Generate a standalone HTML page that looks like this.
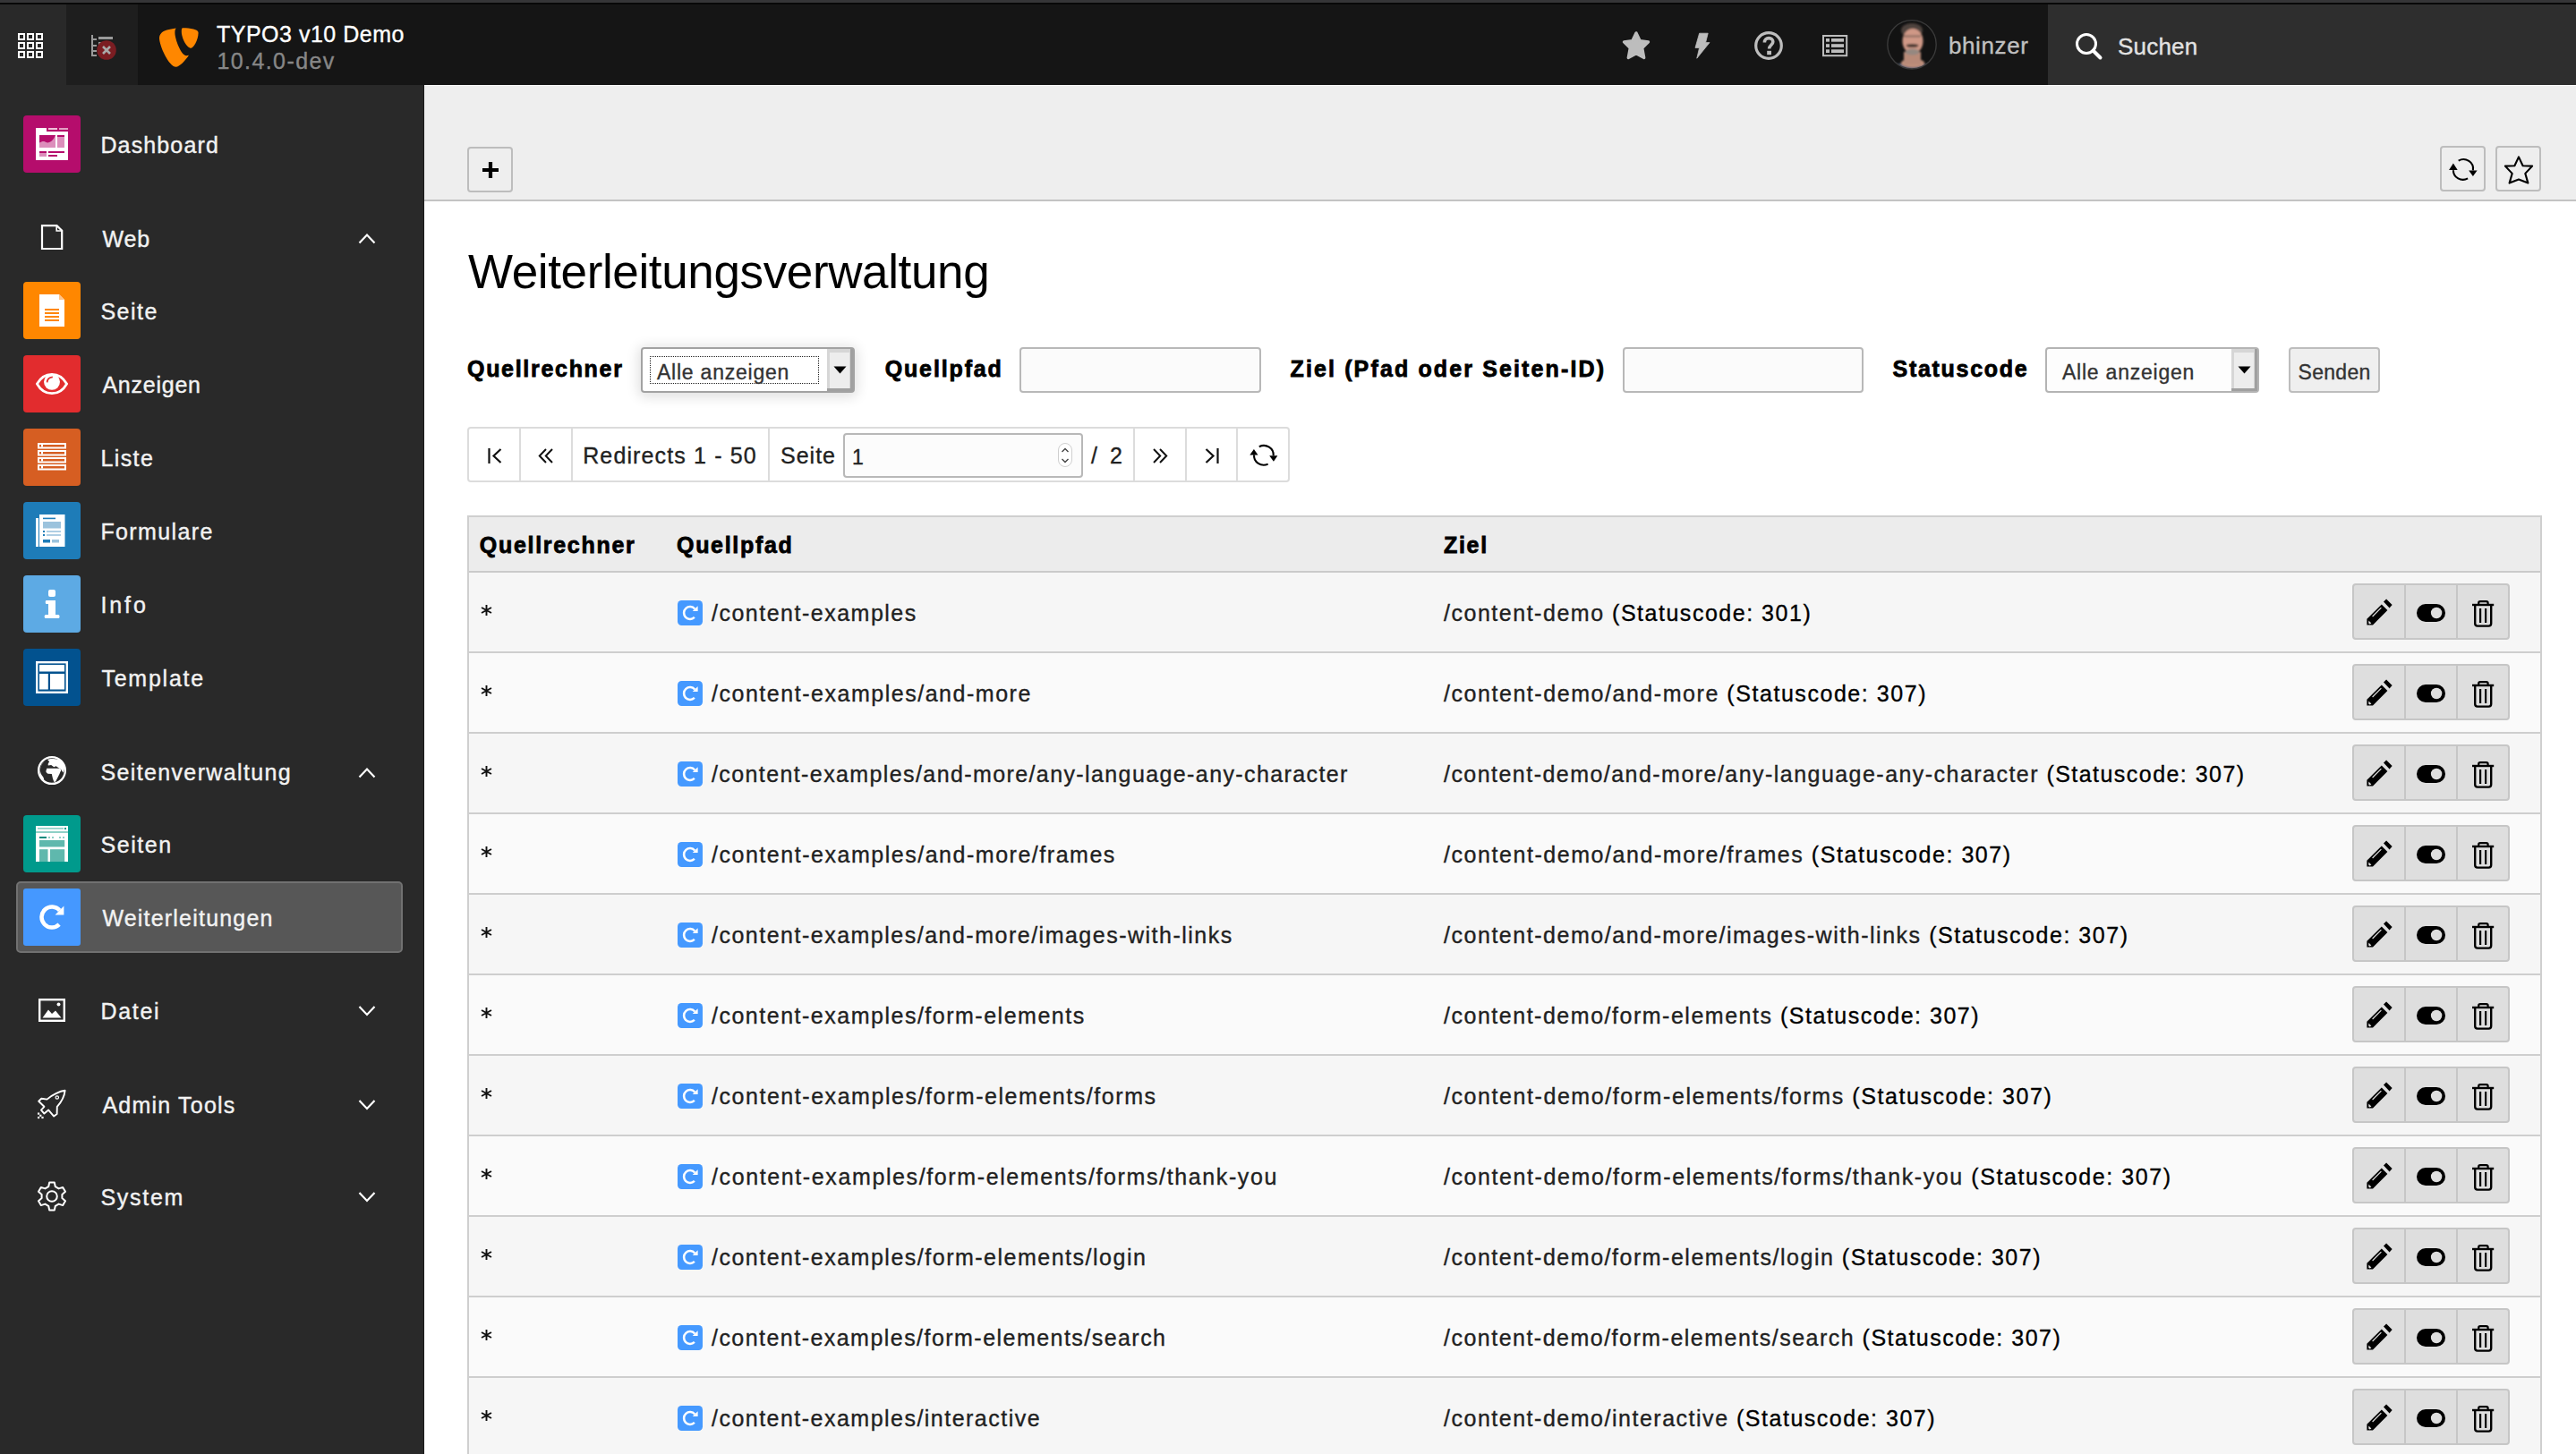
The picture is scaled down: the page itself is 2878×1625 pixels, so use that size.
<!DOCTYPE html>
<html><head><meta charset="utf-8"><title>TYPO3 Weiterleitungen</title>
<style>
*{box-sizing:border-box;margin:0;padding:0}
html,body{width:2878px;height:1625px;overflow:hidden;background:#fff;font-family:"Liberation Sans",sans-serif;position:relative}
.a{position:absolute}
.t{position:absolute;white-space:pre;line-height:1}
.st{-webkit-text-stroke:0.35px currentColor}
svg{position:absolute;overflow:visible}
.sb{color:#f2f2f2;font-size:25px;letter-spacing:1px;-webkit-text-stroke:0.4px #f2f2f2}
.lbl{font-weight:700;font-size:25px;letter-spacing:1.7px;color:#000;-webkit-text-stroke:0.8px #000}
.cell{font-size:25px;letter-spacing:1.35px;color:#212121;-webkit-text-stroke:0.35px currentColor}
.th{font-weight:700;font-size:25px;letter-spacing:1.7px;color:#000;-webkit-text-stroke:0.8px #000}
.mi{position:absolute;left:26px;width:64px;height:64px;border-radius:4px}
.btn{position:absolute;background:#eeeeee;border:2px solid #bdbdbd;border-radius:4px}
.inp{position:absolute;background:#fbfbfb;border:2px solid #b8b8b8;border-radius:4px}
</style></head><body>
<!-- topbar -->
<div class="a" style="left:0;top:0;width:2878px;height:95px;background:#151515"></div>
<div class="a" style="left:0;top:5px;width:74px;height:90px;background:#292929"></div>
<div class="a" style="left:74px;top:5px;width:80px;height:90px;background:#1e1e1e"></div>
<div class="a" style="left:2288px;top:5px;width:590px;height:90px;background:#2e2e2e"></div>
<div class="a" style="left:0;top:0;width:2878px;height:3px;background:#353537"></div>
<div class="a" style="left:0;top:3px;width:2878px;height:2px;background:#080808"></div>
<!-- grid icon -->
<svg style="left:20px;top:37px" width="28" height="28" viewBox="0 0 28 28">
<g fill="none" stroke="#fff" stroke-width="2">
<rect x="1" y="1" width="6" height="6"/><rect x="11" y="1" width="6" height="6"/><rect x="21" y="1" width="6" height="6"/>
<rect x="1" y="11" width="6" height="6"/><rect x="11" y="11" width="6" height="6"/><rect x="21" y="11" width="6" height="6"/>
<rect x="1" y="21" width="6" height="6"/><rect x="11" y="21" width="6" height="6"/><rect x="21" y="21" width="6" height="6"/>
</g></svg>
<!-- tree/list with error badge -->
<svg style="left:100px;top:36px" width="32" height="32" viewBox="0 0 32 32">
<g fill="#9a9a9a">
<rect x="2" y="3" width="2" height="24"/>
<rect x="2" y="7" width="6" height="2"/><rect x="2" y="14" width="6" height="2"/><rect x="2" y="20" width="6" height="2"/><rect x="2" y="25" width="6" height="2"/>
<rect x="10" y="5" width="16" height="3"/><rect x="10" y="11" width="8" height="3"/>
</g>
<circle cx="19" cy="20" r="10.8" fill="#7b1d22"/>
<path d="M15 16 L23 24 M23 16 L15 24" stroke="#a9a9a9" stroke-width="2.6"/>
</svg>
<!-- TYPO3 logo -->
<svg style="left:178px;top:30px" width="44" height="45" viewBox="0 0 44 45">
<path fill="#ff8700" d="M18.8 1.6 C11 2.6 4.6 4.4 2.2 7 C0.8 8.6 0 10.4 0 12.6 C0 21 10.6 44.8 18.6 44.8 C22.6 44.8 28.4 38.2 33 31.8 C32 32.1 31.2 32.2 30.2 32.2 C24.4 32.2 17.4 13.6 17.4 6.8 C17.4 3.8 17.9 2.4 18.8 1.6 Z"/>
<path fill="#ff8700" d="M26.2 1.2 C34.6 1.2 43.6 2.6 43.6 6.6 C43.6 14.2 38.4 23.8 35.4 23.8 C30.8 23.8 24.8 12.8 24.8 5.2 C24.8 2.4 25 1.2 26.2 1.2 Z"/>
</svg>
<div class="t st" style="left:242px;top:26px;font-size:25px;letter-spacing:0.5px;color:#fff">TYPO3 v10 Demo</div>
<div class="t st" style="left:242.5px;top:56px;font-size:25px;letter-spacing:1.4px;color:#878787">10.4.0-dev</div>
<!-- right icons -->
<svg style="left:1812px;top:35px" width="32" height="32" viewBox="0 0 32 32">
<path fill="#bdbdbd" stroke="#bdbdbd" stroke-width="3.2" stroke-linejoin="round" d="M16 1.8 L20.3 10.6 L29.6 11.9 L22.8 18.7 L24.8 29.6 L16 24.9 L7.2 29.6 L9.2 18.7 L2.4 11.9 L11.7 10.6 Z"/>
</svg>
<svg style="left:1890px;top:36px" width="24" height="32" viewBox="0 0 24 32">
<path fill="#bdbdbd" stroke="#bdbdbd" stroke-width="0.8" stroke-linejoin="round" d="M8.6 1.2 L18.2 1.2 L15.6 11.6 L20 11.6 L5.8 29.2 L8.6 17.4 L4 17.4 Z"/>
</svg>
<svg style="left:1960px;top:35px" width="32" height="32" viewBox="0 0 32 32">
<circle cx="16" cy="16" r="14.3" fill="none" stroke="#bdbdbd" stroke-width="3.2"/>
<path d="M11.4 12.4 C11.4 9 13.6 7.6 16.2 7.6 C19 7.6 20.8 9.3 20.8 11.8 C20.8 15.2 16.6 15.4 16.6 19.6" fill="none" stroke="#bdbdbd" stroke-width="3.6"/>
<rect x="14.2" y="21.8" width="4.8" height="4.4" fill="#bdbdbd"/>
</svg>
<svg style="left:2036px;top:39px" width="29" height="25" viewBox="0 0 29 25">
<rect x="1" y="1" width="26.2" height="22.2" fill="none" stroke="#bdbdbd" stroke-width="2"/>
<g fill="#bdbdbd"><rect x="4" y="4" width="4" height="3.7"/><rect x="10" y="4" width="14" height="3.7"/>
<rect x="4" y="10.2" width="4" height="3.7"/><rect x="10" y="10.2" width="14" height="3.7"/>
<rect x="4" y="16.3" width="4" height="3.7"/><rect x="10" y="16.3" width="14" height="3.7"/></g>
</svg>
<!-- avatar -->
<svg style="left:2108px;top:22px" width="56" height="56" viewBox="0 0 56 56">
<defs><clipPath id="av"><circle cx="28" cy="27.8" r="27.2"/></clipPath><filter id="bl" x="-20%" y="-20%" width="140%" height="140%"><feGaussianBlur stdDeviation="1.1"/></filter></defs>
<circle cx="28" cy="27.8" r="27.2" fill="#121212"/>
<g clip-path="url(#av)"><g filter="url(#bl)">
<ellipse cx="28" cy="57" rx="28" ry="9" fill="#4d5b73"/>
<ellipse cx="29" cy="48.5" rx="13" ry="5" fill="#c0907c"/>
<rect x="19" y="36" width="19" height="14" fill="#b88a78"/>
<ellipse cx="28" cy="12" rx="12" ry="8" fill="#4e423c"/>
<ellipse cx="29" cy="24" rx="11.5" ry="14" fill="#cf9886"/>
<rect x="19" y="17.5" width="19" height="2" fill="#8a6a5f"/>
<ellipse cx="28.5" cy="29" rx="7" ry="2" fill="#4a3832"/>
<ellipse cx="28.5" cy="36" rx="8" ry="3.6" fill="#958880"/>
</g></g>
<circle cx="28" cy="27.8" r="27.2" fill="none" stroke="#3a3a3a" stroke-width="1.4"/>
</svg>
<div class="t st" style="left:2177px;top:38px;font-size:26px;letter-spacing:0.6px;color:#c0c0c0">bhinzer</div>
<!-- search -->
<svg style="left:2318px;top:36px" width="32" height="32" viewBox="0 0 32 32">
<circle cx="13" cy="13" r="10.5" fill="none" stroke="#fff" stroke-width="3"/>
<path d="M20.5 20.5 L28.5 28.5" stroke="#fff" stroke-width="4" stroke-linecap="round"/>
</svg>
<div class="t st" style="left:2366px;top:38.5px;font-size:26px;letter-spacing:0.2px;color:#e2e2e2">Suchen</div>
<!-- sidebar -->
<div class="a" style="left:0;top:95px;width:473px;height:1530px;background:#292929"></div>
<div class="a" style="left:473px;top:95px;width:1px;height:1530px;background:#1a1a1a"></div>

<!-- Dashboard -->
<svg style="left:26px;top:129px" width="64" height="64" viewBox="0 0 64 64">
<rect width="64" height="64" rx="4" fill="#b50d6c"/>
<path fill="#fff" d="M14 14h12v4h24v32H14z"/>
<rect x="28" y="14" width="10" height="2" fill="#efc2da"/><rect x="40" y="14" width="10" height="2" fill="#e3a0c4"/>
<rect x="18" y="22" width="18" height="14" fill="#b50d6c"/>
<path fill="#dc8ebb" d="M18 30.5 C20 29.5 22 28.6 24 29.2 C25.6 29.8 26.4 30.8 28 30.2 C31 29.6 33.5 28 36 22 V36 H18z"/>
<rect x="38" y="22" width="8" height="14" fill="#dc8ebb"/><rect x="38" y="22" width="8" height="2" fill="#b50d6c"/>
<rect x="18" y="40" width="8" height="6" fill="#dc8ebb"/><rect x="18" y="40" width="8" height="2" fill="#b50d6c"/>
<rect x="28" y="40" width="18" height="2" fill="#b50d6c"/><rect x="28" y="44" width="10" height="2" fill="#b50d6c"/>
</svg>
<div class="t sb" style="left:112.4px;top:150px;letter-spacing:1.14px">Dashboard</div>
<!-- Web group -->
<svg style="left:44px;top:249px" width="28" height="32" viewBox="0 0 28 32">
<path fill="none" stroke="#fff" stroke-width="2.2" d="M3 3.1 H19.5 L25.2 8.8 V29 H3 Z"/>
<path fill="none" stroke="#fff" stroke-width="1.6" d="M19.2 3 V9 H25.2"/>
</svg>
<div class="t sb" style="left:114.4px;top:254.5px;letter-spacing:0.95px">Web</div>
<svg style="left:400px;top:258.7px" width="20" height="14" viewBox="0 0 20 14"><path d="M1.5 12.5 L10 3.5 L18.5 12.5" fill="none" stroke="#fff" stroke-width="2.2"/></svg>
<!-- Seite -->
<svg style="left:26px;top:315px" width="64" height="64" viewBox="0 0 64 64">
<rect width="64" height="64" rx="4" fill="#ff8700"/>
<path fill="#fff" d="M18 14h22l6 6v30H18z"/><path fill="#ffc48a" d="M40 14l6 6h-6z"/>
<g fill="#ff8700"><rect x="24" y="30" width="16" height="2"/><rect x="24" y="34" width="16" height="2"/><rect x="24" y="38" width="16" height="2"/><rect x="24" y="42" width="16" height="2"/></g>
</svg>
<div class="t sb" style="left:112.4px;top:336px;letter-spacing:1.52px">Seite</div>
<!-- Anzeigen -->
<svg style="left:26px;top:397px" width="64" height="64" viewBox="0 0 64 64">
<rect width="64" height="64" rx="4" fill="#e22c2e"/>
<path fill="none" stroke="#fff" stroke-width="2.7" d="M15.4 32 C19.5 24.6 25.4 21.3 32 21.3 C38.6 21.3 44.5 24.6 48.6 32 C44.5 39.4 38.6 42.7 32 42.7 C25.4 42.7 19.5 39.4 15.4 32Z"/>
<circle cx="32" cy="29.8" r="9" fill="#fff"/>
<path d="M26.6 30.4 C26.8 27 29 24.8 32.8 24.4" stroke="#e22c2e" stroke-width="1.7" fill="none"/>
</svg>
<div class="t sb" style="left:114.4px;top:418px;letter-spacing:0.77px">Anzeigen</div>
<!-- Liste -->
<svg style="left:26px;top:479px" width="64" height="64" viewBox="0 0 64 64">
<rect width="64" height="64" rx="4" fill="#d65e22"/>
<g fill="none" stroke="#fff" stroke-width="2"><rect x="17" y="17" width="30" height="4.5"/><rect x="17" y="25" width="30" height="4.5"/><rect x="17" y="33" width="30" height="4.5"/><rect x="17" y="41" width="30" height="4.5"/></g>
<g fill="#fff"><rect x="20" y="18" width="2" height="2.5"/><rect x="20" y="26" width="2" height="2.5"/><rect x="20" y="34" width="2" height="2.5"/><rect x="20" y="42" width="2" height="2.5"/></g>
</svg>
<div class="t sb" style="left:112.4px;top:500px;letter-spacing:1.40px">Liste</div>
<!-- Formulare -->
<svg style="left:26px;top:561px" width="64" height="64" viewBox="0 0 64 64">
<rect width="64" height="64" rx="4" fill="#1e7cb8"/>
<rect x="14" y="18" width="3" height="32" fill="#fff"/>
<rect x="18" y="14" width="28.5" height="36" fill="#fff"/>
<rect x="22" y="17.6" width="14" height="1.6" fill="#1e7cb8"/>
<rect x="22" y="22" width="20" height="7.5" fill="#9cc3dd"/>
<rect x="22" y="32" width="2" height="2" fill="#1e7cb8"/><rect x="26" y="32.2" width="16" height="1.6" fill="#9cc3dd"/>
<rect x="22" y="36" width="2" height="2" fill="#1e7cb8"/><rect x="26" y="36.2" width="16" height="1.6" fill="#9cc3dd"/>
<rect x="22" y="42" width="8" height="3.5" fill="#1e7cb8"/><rect x="32" y="42" width="8" height="3.5" fill="#9cc3dd"/>
</svg>
<div class="t sb" style="left:112.4px;top:582px;letter-spacing:1.38px">Formulare</div>
<!-- Info -->
<svg style="left:26px;top:643px" width="64" height="64" viewBox="0 0 64 64">
<rect width="64" height="64" rx="4" fill="#5daae4"/>
<rect x="28" y="16" width="8" height="8" rx="2" fill="#fff"/>
<path fill="#fff" d="M26 28h10v16h3a1.5 1.5 0 0 1 1.5 1.5v1a1.5 1.5 0 0 1-1.5 1.5H25.2a1.5 1.5 0 0 1-1.5-1.5v-1a1.5 1.5 0 0 1 1.5-1.5H28V32h-2a1.2 1.2 0 0 1-1.2-1.2v-1.6A1.2 1.2 0 0 1 26 28z"/>
</svg>
<div class="t sb" style="left:112.4px;top:664px;letter-spacing:2.90px">Info</div>
<!-- Template -->
<svg style="left:26px;top:725px" width="64" height="64" viewBox="0 0 64 64">
<rect width="64" height="64" rx="4" fill="#02528f"/>
<rect x="15.2" y="15.2" width="33.6" height="33.6" fill="none" stroke="#fff" stroke-width="2.4"/>
<rect x="18" y="18" width="28" height="7.5" fill="#fff"/>
<rect x="18" y="28" width="9.8" height="17.5" fill="#fff"/><rect x="30" y="28" width="16" height="17.5" fill="#fff"/>
</svg>
<div class="t sb" style="left:113.4px;top:746px;letter-spacing:1.76px">Template</div>
<!-- Seitenverwaltung group -->
<svg style="left:41px;top:844px" width="34" height="34" viewBox="0 0 34 34">
<circle cx="17" cy="17.05" r="14.9" fill="none" stroke="#fff" stroke-width="2.3"/>
<path fill="#fff" d="M9.5 6 C7 8 5 11 4.1 14.8 C3.5 17 4.2 20 5.6 22.3 C6.6 23.5 7.8 24.5 8.3 27.5 L5.5 26 C2.5 21 2.5 11 9.5 6 Z"/>
<path fill="#fff" d="M12 4.8 C16 3.3 25 3.5 29 7.5 C31 10 31.5 13 30.7 16.6 L29.5 19.6 L27.1 15.7 L25.3 14.8 L21.6 12.3 L19.2 13.2 L16.2 11.1 L12.8 11.4 C12.4 10 13 8.5 14.2 7.6 L12 4.8 Z"/>
<path fill="#fff" d="M11.3 14.8 L25.3 14.8 L27.1 15.7 L27.1 17.2 C26 19.5 25.5 21 24.7 22.6 L21.3 29.3 C20.5 30.3 19.6 30.3 19.2 29.6 L18 26.3 L16.8 21.1 L12.5 20.8 C11 20 10.2 18.5 10.4 17.8 Z"/>
</svg>
<div class="t sb" style="left:112.4px;top:851px;letter-spacing:1.37px">Seitenverwaltung</div>
<svg style="left:400px;top:855.7px" width="20" height="14" viewBox="0 0 20 14"><path d="M1.5 12.5 L10 3.5 L18.5 12.5" fill="none" stroke="#fff" stroke-width="2.2"/></svg>
<!-- Seiten -->
<svg style="left:26px;top:911px" width="64" height="64" viewBox="0 0 64 64">
<rect width="64" height="64" rx="4" fill="#009a8c"/>
<rect x="14" y="12" width="36" height="40" fill="#fff"/>
<rect x="14" y="18" width="36" height="2" fill="#8fd0c6"/>
<rect x="16" y="14.2" width="29" height="1.4" fill="#7cc7be"/><rect x="46" y="14" width="2" height="2" fill="#009a8c"/>
<rect x="18" y="24" width="8" height="2" fill="#008a7c"/>
<g fill="#8fd0c6"><rect x="28" y="24" width="2" height="2"/><rect x="32" y="24" width="2" height="2"/><rect x="40" y="24" width="2" height="2"/><rect x="44" y="24" width="2" height="2"/></g>
<rect x="18" y="28" width="28.2" height="7.5" fill="#5fb8ad"/>
<rect x="18" y="38.2" width="9.5" height="13.8" fill="#5fb8ad"/><rect x="30" y="38.2" width="16.2" height="13.8" fill="#5fb8ad"/>
</svg>
<div class="t sb" style="left:112.4px;top:932px;letter-spacing:1.60px">Seiten</div>
<!-- Weiterleitungen (active) -->
<div class="a" style="left:18px;top:985px;width:432px;height:80px;background:#575757;border:2px solid #717171;border-radius:5px"></div>
<svg style="left:26px;top:993px" width="64" height="64" viewBox="0 0 64 64">
<rect width="64" height="64" rx="3" fill="#4598ff"/>
<path d="M40.13 40.13 A11.5 11.5 0 1 1 40.68 24.46" fill="none" stroke="#fff" stroke-width="4.5"/>
<path fill="#fff" d="M45.4 19.6 V29.4 H35.6 Z"/>
</svg>
<div class="t sb" style="left:114.4px;top:1014px;letter-spacing:1.20px">Weiterleitungen</div>
<!-- Datei group -->
<svg style="left:43px;top:1116px" width="30" height="26" viewBox="0 0 30 26">
<rect x="1.2" y="1.2" width="27.6" height="23.6" fill="none" stroke="#fff" stroke-width="2.4"/>
<path fill="#fff" d="M4.5 21.5 L11 12.5 L15 17 L19 13.5 L25.5 21.5Z"/>
<circle cx="22.5" cy="6.5" r="2" fill="#fff"/>
</svg>
<div class="t sb" style="left:112.4px;top:1118px;letter-spacing:1.70px">Datei</div>
<svg style="left:400px;top:1123px" width="20" height="14" viewBox="0 0 20 14"><path d="M1.5 2 L10 11 L18.5 2" fill="none" stroke="#fff" stroke-width="2.2"/></svg>
<!-- Admin Tools group -->
<svg style="left:41px;top:1217px" width="34" height="34" viewBox="0 0 34 34">
<path fill="none" stroke="#fff" stroke-width="1.9" stroke-linejoin="round" d="M31.6 1.8 C26 2.5 17 6.5 11.5 11.6 L5.3 10.8 L2.2 13.8 L8.4 19.8 L5 23.6 L8.4 27.6 L13.2 23.6 L19.2 30.6 L22.6 28 L22.8 19.8 C28 14 31 8 31.6 1.8 Z"/>
<circle cx="22.8" cy="9.5" r="1.7" fill="none" stroke="#fff" stroke-width="1.2"/>
<g fill="#fff"><rect x="1" y="26.5" width="2.2" height="2.2"/><rect x="3.2" y="28.7" width="2.2" height="2.2"/><rect x="1" y="30.9" width="2.2" height="2.2"/><rect x="5.4" y="30.9" width="2.2" height="2.2"/></g>
</svg>
<div class="t sb" style="left:114.4px;top:1223px;letter-spacing:1.22px">Admin Tools</div>
<svg style="left:400px;top:1228px" width="20" height="14" viewBox="0 0 20 14"><path d="M1.5 2 L10 11 L18.5 2" fill="none" stroke="#fff" stroke-width="2.2"/></svg>
<!-- System group -->
<svg style="left:41px;top:1320px" width="34" height="34" viewBox="0 0 34 34">
<path fill="none" stroke="#fff" stroke-width="2" stroke-linejoin="round" d="M14.2 1.5 H19.8 L20.8 6.2 L24.6 8.4 L29.2 6.9 L32 11.8 L28.4 15 V19 L32 22.2 L29.2 27.1 L24.6 25.6 L20.8 27.8 L19.8 32.5 H14.2 L13.2 27.8 L9.4 25.6 L4.8 27.1 L2 22.2 L5.6 19 V15 L2 11.8 L4.8 6.9 L9.4 8.4 L13.2 6.2 Z"/>
<circle cx="17" cy="17" r="5.8" fill="none" stroke="#fff" stroke-width="2"/>
</svg>
<div class="t sb" style="left:112.4px;top:1326px;letter-spacing:1.74px">System</div>
<svg style="left:400px;top:1331px" width="20" height="14" viewBox="0 0 20 14"><path d="M1.5 2 L10 11 L18.5 2" fill="none" stroke="#fff" stroke-width="2.2"/></svg>
<!-- content -->
<div class="a" style="left:474px;top:95px;width:2404px;height:128px;background:#eeeeee"></div>
<div class="a" style="left:474px;top:95px;width:2404px;height:1px;background:#fafafa"></div>
<div class="a" style="left:474px;top:223px;width:2404px;height:2px;background:#c3c3c3"></div>
<!-- + button -->
<div class="btn" style="left:522px;top:164px;width:51px;height:51px"></div>
<svg style="left:538px;top:180px" width="20" height="20" viewBox="0 0 20 20"><path d="M10 1 V19 M1 10 H19" stroke="#000" stroke-width="4.2"/></svg>
<!-- refresh + star buttons -->
<div class="btn" style="left:2726px;top:163px;width:51px;height:51px"></div>
<svg style="left:2720px;top:158px" width="60" height="60" viewBox="0 0 60 60">
<path d="M26.7 21.6 A10.8 10.5 0 0 1 42.9 32.3" fill="none" stroke="#000" stroke-width="2.1"/>
<path d="M37.1 41.4 A10.8 10.5 0 0 1 20.9 32.2" fill="none" stroke="#000" stroke-width="2.1"/>
<path d="M16.1 31.9 L25.7 31.9 L20.9 24.6 Z" fill="#000"/>
<path d="M38.2 32.6 L47.6 32.6 L42.9 39 Z" fill="#000"/>
</svg>
<div class="btn" style="left:2788px;top:163px;width:51px;height:51px"></div>
<svg style="left:2788px;top:163px" width="52" height="52" viewBox="0 0 52 52">
<path d="M26 12.4 L30.6 22.3 L41.1 22.6 L33.3 30.9 L36.4 41.6 L26 37.6 L15.6 41.6 L18.7 30.9 L10.9 22.6 L21.4 22.3 Z" fill="none" stroke="#000" stroke-width="2.1" stroke-linejoin="round"/>
</svg>
<!-- title -->
<div class="t" style="left:523px;top:277px;font-size:53px;letter-spacing:-0.37px;color:#000">Weiterleitungsverwaltung</div>
<!-- filter row -->
<div class="t lbl" style="left:522px;top:400px">Quellrechner</div>
<div class="a" style="left:716px;top:388px;width:239px;height:51px;background:#fff;border:2px solid #a2a2a2;border-radius:4px;box-shadow:0 2px 14px 3px rgba(0,0,0,0.12)"></div>
<div class="a" style="left:924px;top:390px;width:29px;height:47px;background:#a0a0a0"></div>
<div class="a" style="left:924px;top:390px;width:26px;height:44px;background:#d6d6d6"></div>
<div class="a" style="left:927px;top:394px;width:22px;height:40px;background:#ededed"></div>
<svg style="left:931px;top:409px" width="15" height="9" viewBox="0 0 15 9"><path d="M0.5 0.5 H14.5 L7.5 8.5Z" fill="#000"/></svg>
<div class="a" style="left:726px;top:398px;width:189px;height:31px;border:1px dotted #222"></div>
<div class="t st" style="left:734px;top:404.5px;font-size:23px;letter-spacing:0.77px;color:#333">Alle anzeigen</div>

<div class="t lbl" style="left:988.7px;top:400px;letter-spacing:1.86px">Quellpfad</div>
<div class="inp" style="left:1139px;top:388px;width:270px;height:51px"></div>
<div class="t lbl" style="left:1441.5px;top:400px;letter-spacing:2.13px">Ziel (Pfad oder Seiten-ID)</div>
<div class="inp" style="left:1813px;top:388px;width:269px;height:51px"></div>
<div class="t lbl" style="left:2114.6px;top:400px">Statuscode</div>
<div class="a" style="left:2285px;top:388px;width:239px;height:51px;background:#fdfdfd;border:2px solid #b4b4b4;border-radius:4px"></div>
<div class="a" style="left:2493px;top:390px;width:29px;height:47px;background:#a0a0a0"></div>
<div class="a" style="left:2493px;top:390px;width:26px;height:44px;background:#d6d6d6"></div>
<div class="a" style="left:2496px;top:394px;width:22px;height:40px;background:#ededed"></div>
<svg style="left:2500px;top:409px" width="15" height="9" viewBox="0 0 15 9"><path d="M0.5 0.5 H14.5 L7.5 8.5Z" fill="#000"/></svg>
<div class="t st" style="left:2304px;top:404.5px;font-size:23px;letter-spacing:0.77px;color:#333">Alle anzeigen</div>
<div class="a" style="left:2557px;top:388px;width:102px;height:51px;background:#efefef;border:2px solid #bdbdbd;border-radius:4px"></div>
<div class="t st" style="left:2567.5px;top:404.5px;font-size:23px;letter-spacing:0.3px;color:#333">Senden</div>
<!-- pagination -->
<div class="a" style="left:522px;top:477px;width:919px;height:62px;background:#fff;border:2px solid #dcdcdc;border-radius:4px"></div>
<div class="a" style="left:580px;top:478px;width:2px;height:60px;background:#dcdcdc"></div>
<div class="a" style="left:638px;top:478px;width:2px;height:60px;background:#dcdcdc"></div>
<div class="a" style="left:858px;top:478px;width:2px;height:60px;background:#dcdcdc"></div>
<div class="a" style="left:1266px;top:478px;width:2px;height:60px;background:#dcdcdc"></div>
<div class="a" style="left:1324px;top:478px;width:2px;height:60px;background:#dcdcdc"></div>
<div class="a" style="left:1381px;top:478px;width:2px;height:60px;background:#dcdcdc"></div>
<svg style="left:545px;top:501px" width="16" height="17" viewBox="0 0 16 17"><path d="M1.5 0 V17 M14.5 1 L6.5 8.5 L14.5 16" fill="none" stroke="#111" stroke-width="2.2"/></svg>
<svg style="left:601px;top:501px" width="18" height="17" viewBox="0 0 18 17"><path d="M9 1 L1.8 8.5 L9 16 M16 1 L8.8 8.5 L16 16" fill="none" stroke="#111" stroke-width="2"/></svg>
<div class="t st" style="left:651.2px;top:497px;font-size:25px;letter-spacing:1.13px;color:#212121">Redirects 1 - 50</div>
<div class="t st" style="left:872px;top:497px;font-size:25px;letter-spacing:1px;color:#212121">Seite</div>
<div class="a" style="left:942px;top:484px;width:268px;height:50px;background:#fcfcfc;border:2px solid #b8b8b8;border-radius:4px"></div>
<div class="t st" style="left:952px;top:500px;font-size:23px;color:#212121">1</div>
<div class="a" style="left:1182px;top:495px;width:16px;height:27px;border:1px solid #cfcfcf;border-radius:8px;background:#fff"></div>
<svg style="left:1184px;top:498px" width="12" height="22" viewBox="0 0 12 22"><path d="M2.5 7 L6 3.5 L9.5 7 M2.5 15 L6 18.5 L9.5 15" fill="none" stroke="#444" stroke-width="1.4"/></svg>
<div class="t st" style="left:1219px;top:497px;font-size:25px;letter-spacing:3.5px;color:#212121">/ 2</div>
<svg style="left:1287px;top:501px" width="18" height="17" viewBox="0 0 18 17"><path d="M2 1 L9.2 8.5 L2 16 M9 1 L16.2 8.5 L9 16" fill="none" stroke="#111" stroke-width="2"/></svg>
<svg style="left:1346px;top:501px" width="16" height="17" viewBox="0 0 16 17"><path d="M14.5 0 V17 M1.5 1 L9.5 8.5 L1.5 16" fill="none" stroke="#111" stroke-width="2.2"/></svg>
<svg style="left:1390px;top:490px" width="44" height="36" viewBox="0 0 44 36">
<path d="M16.8 9.2 A10.8 10.3 0 0 1 32.7 19.2" fill="none" stroke="#000" stroke-width="2.1"/>
<path d="M26.7 28.6 A10.8 10.3 0 0 1 11.1 18.4" fill="none" stroke="#000" stroke-width="2.1"/>
<path d="M6.3 18.6 L15.5 18.6 L10.9 12.1 Z" fill="#000"/>
<path d="M28.2 19.2 L37.4 19.2 L32.9 25.7 Z" fill="#000"/>
</svg>
<!-- table -->
<div class="a" style="left:522px;top:576px;width:2318px;height:1100px;border:2px solid #cfcfcf;background:#fafafa"></div>
<div class="a" style="left:524px;top:578px;width:2314px;height:60px;background:#ececec"></div>
<div class="a" style="left:524px;top:638px;width:2314px;height:2px;background:#cacaca"></div>
<div class="t th" style="left:535.8px;top:597px">Quellrechner</div>
<div class="t th" style="left:756px;top:597px">Quellpfad</div>
<div class="t th" style="left:1613px;top:597px">Ziel</div>
<div class="a" style="left:524px;top:640px;width:2314px;height:88px;background:#f6f6f6"></div>
<div class="a" style="left:524px;top:728px;width:2314px;height:2px;background:#cecece"></div>
<svg style="left:537px;top:676px" width="13" height="12" viewBox="0 0 13 12"><path d="M6.5 0 V12 M1 3 L12 9 M12 3 L1 9" stroke="#111" stroke-width="1.9"/></svg>
<svg style="left:757px;top:671px" width="28" height="28" viewBox="0 0 28 28"><rect width="28" height="28" rx="4.5" fill="#4599ff"/><path d="M18.88 18.88 A6.9 6.9 0 1 1 19.2 9.47" fill="none" stroke="#fff" stroke-width="2.5"/><path d="M22.6 6.2 V12.1 H16.7 Z" fill="#fff"/></svg>
<div class="t cell" style="left:795px;top:673px;letter-spacing:1.500px">/content-examples</div>
<div class="t cell" style="left:1613px;top:673px;letter-spacing:1.520px">/content-demo<span style="color:#000"> (Statuscode: 301)</span></div>
<div class="a" style="left:2628px;top:652px;width:176px;height:63px;background:#dedede;border:2px solid #c6c6c6;border-radius:4px"></div>
<div class="a" style="left:2686px;top:653px;width:2px;height:61px;background:#c6c6c6"></div>
<div class="a" style="left:2744px;top:653px;width:2px;height:61px;background:#c6c6c6"></div>
<svg style="left:2644px;top:670px" width="29" height="29" viewBox="0 0 29 29"><path d="M19 2.4 L22.1 -0.4 L28.6 6 L25.6 9.4 Z" fill="#000"/><path d="M16.8 5.4 L23.4 12 L7 28.4 H0.4 V21.8 Z" fill="#000"/><path d="M6.6 19 L16.4 9.2" stroke="#dedede" stroke-width="1.2"/><path d="M2.4 23.4 L5.4 26.4 L3.6 27.6 L2.2 26.4 Z" fill="#dedede"/></svg>
<svg style="left:2700px;top:675px" width="32" height="20" viewBox="0 0 32 20"><rect width="32" height="20" rx="10" fill="#000"/><circle cx="22.1" cy="10" r="6.2" fill="#dedede"/></svg>
<svg style="left:2762px;top:671px" width="25" height="30" viewBox="0 0 25 30"><path d="M0 5 H24.2" stroke="#000" stroke-width="2.4"/><path d="M7.2 5 V2.8 Q7.2 1.1 9 1.1 H15.8 Q17.6 1.1 17.6 2.8 V5" fill="none" stroke="#000" stroke-width="2.2"/><path d="M3.2 6 V25.8 Q3.2 28.6 6 28.6 H18.4 Q21.2 28.6 21.2 25.8 V6" fill="none" stroke="#000" stroke-width="2.4"/><rect x="8" y="9" width="2.2" height="16" fill="#000"/><rect x="14" y="9" width="2.2" height="16" fill="#000"/></svg>
<div class="a" style="left:524px;top:730px;width:2314px;height:88px;background:#fafafa"></div>
<div class="a" style="left:524px;top:818px;width:2314px;height:2px;background:#cecece"></div>
<svg style="left:537px;top:766px" width="13" height="12" viewBox="0 0 13 12"><path d="M6.5 0 V12 M1 3 L12 9 M12 3 L1 9" stroke="#111" stroke-width="1.9"/></svg>
<svg style="left:757px;top:761px" width="28" height="28" viewBox="0 0 28 28"><rect width="28" height="28" rx="4.5" fill="#4599ff"/><path d="M18.88 18.88 A6.9 6.9 0 1 1 19.2 9.47" fill="none" stroke="#fff" stroke-width="2.5"/><path d="M22.6 6.2 V12.1 H16.7 Z" fill="#fff"/></svg>
<div class="t cell" style="left:795px;top:763px;letter-spacing:1.526px">/content-examples/and-more</div>
<div class="t cell" style="left:1613px;top:763px;letter-spacing:1.550px">/content-demo/and-more<span style="color:#000"> (Statuscode: 307)</span></div>
<div class="a" style="left:2628px;top:742px;width:176px;height:63px;background:#dedede;border:2px solid #c6c6c6;border-radius:4px"></div>
<div class="a" style="left:2686px;top:743px;width:2px;height:61px;background:#c6c6c6"></div>
<div class="a" style="left:2744px;top:743px;width:2px;height:61px;background:#c6c6c6"></div>
<svg style="left:2644px;top:760px" width="29" height="29" viewBox="0 0 29 29"><path d="M19 2.4 L22.1 -0.4 L28.6 6 L25.6 9.4 Z" fill="#000"/><path d="M16.8 5.4 L23.4 12 L7 28.4 H0.4 V21.8 Z" fill="#000"/><path d="M6.6 19 L16.4 9.2" stroke="#dedede" stroke-width="1.2"/><path d="M2.4 23.4 L5.4 26.4 L3.6 27.6 L2.2 26.4 Z" fill="#dedede"/></svg>
<svg style="left:2700px;top:765px" width="32" height="20" viewBox="0 0 32 20"><rect width="32" height="20" rx="10" fill="#000"/><circle cx="22.1" cy="10" r="6.2" fill="#dedede"/></svg>
<svg style="left:2762px;top:761px" width="25" height="30" viewBox="0 0 25 30"><path d="M0 5 H24.2" stroke="#000" stroke-width="2.4"/><path d="M7.2 5 V2.8 Q7.2 1.1 9 1.1 H15.8 Q17.6 1.1 17.6 2.8 V5" fill="none" stroke="#000" stroke-width="2.2"/><path d="M3.2 6 V25.8 Q3.2 28.6 6 28.6 H18.4 Q21.2 28.6 21.2 25.8 V6" fill="none" stroke="#000" stroke-width="2.4"/><rect x="8" y="9" width="2.2" height="16" fill="#000"/><rect x="14" y="9" width="2.2" height="16" fill="#000"/></svg>
<div class="a" style="left:524px;top:820px;width:2314px;height:88px;background:#f6f6f6"></div>
<div class="a" style="left:524px;top:908px;width:2314px;height:2px;background:#cecece"></div>
<svg style="left:537px;top:856px" width="13" height="12" viewBox="0 0 13 12"><path d="M6.5 0 V12 M1 3 L12 9 M12 3 L1 9" stroke="#111" stroke-width="1.9"/></svg>
<svg style="left:757px;top:851px" width="28" height="28" viewBox="0 0 28 28"><rect width="28" height="28" rx="4.5" fill="#4599ff"/><path d="M18.88 18.88 A6.9 6.9 0 1 1 19.2 9.47" fill="none" stroke="#fff" stroke-width="2.5"/><path d="M22.6 6.2 V12.1 H16.7 Z" fill="#fff"/></svg>
<div class="t cell" style="left:795px;top:853px;letter-spacing:1.396px">/content-examples/and-more/any-language-any-character</div>
<div class="t cell" style="left:1613px;top:853px;letter-spacing:1.461px">/content-demo/and-more/any-language-any-character<span style="color:#000"> (Statuscode: 307)</span></div>
<div class="a" style="left:2628px;top:832px;width:176px;height:63px;background:#dedede;border:2px solid #c6c6c6;border-radius:4px"></div>
<div class="a" style="left:2686px;top:833px;width:2px;height:61px;background:#c6c6c6"></div>
<div class="a" style="left:2744px;top:833px;width:2px;height:61px;background:#c6c6c6"></div>
<svg style="left:2644px;top:850px" width="29" height="29" viewBox="0 0 29 29"><path d="M19 2.4 L22.1 -0.4 L28.6 6 L25.6 9.4 Z" fill="#000"/><path d="M16.8 5.4 L23.4 12 L7 28.4 H0.4 V21.8 Z" fill="#000"/><path d="M6.6 19 L16.4 9.2" stroke="#dedede" stroke-width="1.2"/><path d="M2.4 23.4 L5.4 26.4 L3.6 27.6 L2.2 26.4 Z" fill="#dedede"/></svg>
<svg style="left:2700px;top:855px" width="32" height="20" viewBox="0 0 32 20"><rect width="32" height="20" rx="10" fill="#000"/><circle cx="22.1" cy="10" r="6.2" fill="#dedede"/></svg>
<svg style="left:2762px;top:851px" width="25" height="30" viewBox="0 0 25 30"><path d="M0 5 H24.2" stroke="#000" stroke-width="2.4"/><path d="M7.2 5 V2.8 Q7.2 1.1 9 1.1 H15.8 Q17.6 1.1 17.6 2.8 V5" fill="none" stroke="#000" stroke-width="2.2"/><path d="M3.2 6 V25.8 Q3.2 28.6 6 28.6 H18.4 Q21.2 28.6 21.2 25.8 V6" fill="none" stroke="#000" stroke-width="2.4"/><rect x="8" y="9" width="2.2" height="16" fill="#000"/><rect x="14" y="9" width="2.2" height="16" fill="#000"/></svg>
<div class="a" style="left:524px;top:910px;width:2314px;height:88px;background:#fafafa"></div>
<div class="a" style="left:524px;top:998px;width:2314px;height:2px;background:#cecece"></div>
<svg style="left:537px;top:946px" width="13" height="12" viewBox="0 0 13 12"><path d="M6.5 0 V12 M1 3 L12 9 M12 3 L1 9" stroke="#111" stroke-width="1.9"/></svg>
<svg style="left:757px;top:941px" width="28" height="28" viewBox="0 0 28 28"><rect width="28" height="28" rx="4.5" fill="#4599ff"/><path d="M18.88 18.88 A6.9 6.9 0 1 1 19.2 9.47" fill="none" stroke="#fff" stroke-width="2.5"/><path d="M22.6 6.2 V12.1 H16.7 Z" fill="#fff"/></svg>
<div class="t cell" style="left:795px;top:943px;letter-spacing:1.525px">/content-examples/and-more/frames</div>
<div class="t cell" style="left:1613px;top:943px;letter-spacing:1.559px">/content-demo/and-more/frames<span style="color:#000"> (Statuscode: 307)</span></div>
<div class="a" style="left:2628px;top:922px;width:176px;height:63px;background:#dedede;border:2px solid #c6c6c6;border-radius:4px"></div>
<div class="a" style="left:2686px;top:923px;width:2px;height:61px;background:#c6c6c6"></div>
<div class="a" style="left:2744px;top:923px;width:2px;height:61px;background:#c6c6c6"></div>
<svg style="left:2644px;top:940px" width="29" height="29" viewBox="0 0 29 29"><path d="M19 2.4 L22.1 -0.4 L28.6 6 L25.6 9.4 Z" fill="#000"/><path d="M16.8 5.4 L23.4 12 L7 28.4 H0.4 V21.8 Z" fill="#000"/><path d="M6.6 19 L16.4 9.2" stroke="#dedede" stroke-width="1.2"/><path d="M2.4 23.4 L5.4 26.4 L3.6 27.6 L2.2 26.4 Z" fill="#dedede"/></svg>
<svg style="left:2700px;top:945px" width="32" height="20" viewBox="0 0 32 20"><rect width="32" height="20" rx="10" fill="#000"/><circle cx="22.1" cy="10" r="6.2" fill="#dedede"/></svg>
<svg style="left:2762px;top:941px" width="25" height="30" viewBox="0 0 25 30"><path d="M0 5 H24.2" stroke="#000" stroke-width="2.4"/><path d="M7.2 5 V2.8 Q7.2 1.1 9 1.1 H15.8 Q17.6 1.1 17.6 2.8 V5" fill="none" stroke="#000" stroke-width="2.2"/><path d="M3.2 6 V25.8 Q3.2 28.6 6 28.6 H18.4 Q21.2 28.6 21.2 25.8 V6" fill="none" stroke="#000" stroke-width="2.4"/><rect x="8" y="9" width="2.2" height="16" fill="#000"/><rect x="14" y="9" width="2.2" height="16" fill="#000"/></svg>
<div class="a" style="left:524px;top:1000px;width:2314px;height:88px;background:#f6f6f6"></div>
<div class="a" style="left:524px;top:1088px;width:2314px;height:2px;background:#cecece"></div>
<svg style="left:537px;top:1036px" width="13" height="12" viewBox="0 0 13 12"><path d="M6.5 0 V12 M1 3 L12 9 M12 3 L1 9" stroke="#111" stroke-width="1.9"/></svg>
<svg style="left:757px;top:1031px" width="28" height="28" viewBox="0 0 28 28"><rect width="28" height="28" rx="4.5" fill="#4599ff"/><path d="M18.88 18.88 A6.9 6.9 0 1 1 19.2 9.47" fill="none" stroke="#fff" stroke-width="2.5"/><path d="M22.6 6.2 V12.1 H16.7 Z" fill="#fff"/></svg>
<div class="t cell" style="left:795px;top:1033px;letter-spacing:1.497px">/content-examples/and-more/images-with-links</div>
<div class="t cell" style="left:1613px;top:1033px;letter-spacing:1.531px">/content-demo/and-more/images-with-links<span style="color:#000"> (Statuscode: 307)</span></div>
<div class="a" style="left:2628px;top:1012px;width:176px;height:63px;background:#dedede;border:2px solid #c6c6c6;border-radius:4px"></div>
<div class="a" style="left:2686px;top:1013px;width:2px;height:61px;background:#c6c6c6"></div>
<div class="a" style="left:2744px;top:1013px;width:2px;height:61px;background:#c6c6c6"></div>
<svg style="left:2644px;top:1030px" width="29" height="29" viewBox="0 0 29 29"><path d="M19 2.4 L22.1 -0.4 L28.6 6 L25.6 9.4 Z" fill="#000"/><path d="M16.8 5.4 L23.4 12 L7 28.4 H0.4 V21.8 Z" fill="#000"/><path d="M6.6 19 L16.4 9.2" stroke="#dedede" stroke-width="1.2"/><path d="M2.4 23.4 L5.4 26.4 L3.6 27.6 L2.2 26.4 Z" fill="#dedede"/></svg>
<svg style="left:2700px;top:1035px" width="32" height="20" viewBox="0 0 32 20"><rect width="32" height="20" rx="10" fill="#000"/><circle cx="22.1" cy="10" r="6.2" fill="#dedede"/></svg>
<svg style="left:2762px;top:1031px" width="25" height="30" viewBox="0 0 25 30"><path d="M0 5 H24.2" stroke="#000" stroke-width="2.4"/><path d="M7.2 5 V2.8 Q7.2 1.1 9 1.1 H15.8 Q17.6 1.1 17.6 2.8 V5" fill="none" stroke="#000" stroke-width="2.2"/><path d="M3.2 6 V25.8 Q3.2 28.6 6 28.6 H18.4 Q21.2 28.6 21.2 25.8 V6" fill="none" stroke="#000" stroke-width="2.4"/><rect x="8" y="9" width="2.2" height="16" fill="#000"/><rect x="14" y="9" width="2.2" height="16" fill="#000"/></svg>
<div class="a" style="left:524px;top:1090px;width:2314px;height:88px;background:#fafafa"></div>
<div class="a" style="left:524px;top:1178px;width:2314px;height:2px;background:#cecece"></div>
<svg style="left:537px;top:1126px" width="13" height="12" viewBox="0 0 13 12"><path d="M6.5 0 V12 M1 3 L12 9 M12 3 L1 9" stroke="#111" stroke-width="1.9"/></svg>
<svg style="left:757px;top:1121px" width="28" height="28" viewBox="0 0 28 28"><rect width="28" height="28" rx="4.5" fill="#4599ff"/><path d="M18.88 18.88 A6.9 6.9 0 1 1 19.2 9.47" fill="none" stroke="#fff" stroke-width="2.5"/><path d="M22.6 6.2 V12.1 H16.7 Z" fill="#fff"/></svg>
<div class="t cell" style="left:795px;top:1123px;letter-spacing:1.507px">/content-examples/form-elements</div>
<div class="t cell" style="left:1613px;top:1123px;letter-spacing:1.518px">/content-demo/form-elements<span style="color:#000"> (Statuscode: 307)</span></div>
<div class="a" style="left:2628px;top:1102px;width:176px;height:63px;background:#dedede;border:2px solid #c6c6c6;border-radius:4px"></div>
<div class="a" style="left:2686px;top:1103px;width:2px;height:61px;background:#c6c6c6"></div>
<div class="a" style="left:2744px;top:1103px;width:2px;height:61px;background:#c6c6c6"></div>
<svg style="left:2644px;top:1120px" width="29" height="29" viewBox="0 0 29 29"><path d="M19 2.4 L22.1 -0.4 L28.6 6 L25.6 9.4 Z" fill="#000"/><path d="M16.8 5.4 L23.4 12 L7 28.4 H0.4 V21.8 Z" fill="#000"/><path d="M6.6 19 L16.4 9.2" stroke="#dedede" stroke-width="1.2"/><path d="M2.4 23.4 L5.4 26.4 L3.6 27.6 L2.2 26.4 Z" fill="#dedede"/></svg>
<svg style="left:2700px;top:1125px" width="32" height="20" viewBox="0 0 32 20"><rect width="32" height="20" rx="10" fill="#000"/><circle cx="22.1" cy="10" r="6.2" fill="#dedede"/></svg>
<svg style="left:2762px;top:1121px" width="25" height="30" viewBox="0 0 25 30"><path d="M0 5 H24.2" stroke="#000" stroke-width="2.4"/><path d="M7.2 5 V2.8 Q7.2 1.1 9 1.1 H15.8 Q17.6 1.1 17.6 2.8 V5" fill="none" stroke="#000" stroke-width="2.2"/><path d="M3.2 6 V25.8 Q3.2 28.6 6 28.6 H18.4 Q21.2 28.6 21.2 25.8 V6" fill="none" stroke="#000" stroke-width="2.4"/><rect x="8" y="9" width="2.2" height="16" fill="#000"/><rect x="14" y="9" width="2.2" height="16" fill="#000"/></svg>
<div class="a" style="left:524px;top:1180px;width:2314px;height:88px;background:#f6f6f6"></div>
<div class="a" style="left:524px;top:1268px;width:2314px;height:2px;background:#cecece"></div>
<svg style="left:537px;top:1216px" width="13" height="12" viewBox="0 0 13 12"><path d="M6.5 0 V12 M1 3 L12 9 M12 3 L1 9" stroke="#111" stroke-width="1.9"/></svg>
<svg style="left:757px;top:1211px" width="28" height="28" viewBox="0 0 28 28"><rect width="28" height="28" rx="4.5" fill="#4599ff"/><path d="M18.88 18.88 A6.9 6.9 0 1 1 19.2 9.47" fill="none" stroke="#fff" stroke-width="2.5"/><path d="M22.6 6.2 V12.1 H16.7 Z" fill="#fff"/></svg>
<div class="t cell" style="left:795px;top:1213px;letter-spacing:1.544px">/content-examples/form-elements/forms</div>
<div class="t cell" style="left:1613px;top:1213px;letter-spacing:1.570px">/content-demo/form-elements/forms<span style="color:#000"> (Statuscode: 307)</span></div>
<div class="a" style="left:2628px;top:1192px;width:176px;height:63px;background:#dedede;border:2px solid #c6c6c6;border-radius:4px"></div>
<div class="a" style="left:2686px;top:1193px;width:2px;height:61px;background:#c6c6c6"></div>
<div class="a" style="left:2744px;top:1193px;width:2px;height:61px;background:#c6c6c6"></div>
<svg style="left:2644px;top:1210px" width="29" height="29" viewBox="0 0 29 29"><path d="M19 2.4 L22.1 -0.4 L28.6 6 L25.6 9.4 Z" fill="#000"/><path d="M16.8 5.4 L23.4 12 L7 28.4 H0.4 V21.8 Z" fill="#000"/><path d="M6.6 19 L16.4 9.2" stroke="#dedede" stroke-width="1.2"/><path d="M2.4 23.4 L5.4 26.4 L3.6 27.6 L2.2 26.4 Z" fill="#dedede"/></svg>
<svg style="left:2700px;top:1215px" width="32" height="20" viewBox="0 0 32 20"><rect width="32" height="20" rx="10" fill="#000"/><circle cx="22.1" cy="10" r="6.2" fill="#dedede"/></svg>
<svg style="left:2762px;top:1211px" width="25" height="30" viewBox="0 0 25 30"><path d="M0 5 H24.2" stroke="#000" stroke-width="2.4"/><path d="M7.2 5 V2.8 Q7.2 1.1 9 1.1 H15.8 Q17.6 1.1 17.6 2.8 V5" fill="none" stroke="#000" stroke-width="2.2"/><path d="M3.2 6 V25.8 Q3.2 28.6 6 28.6 H18.4 Q21.2 28.6 21.2 25.8 V6" fill="none" stroke="#000" stroke-width="2.4"/><rect x="8" y="9" width="2.2" height="16" fill="#000"/><rect x="14" y="9" width="2.2" height="16" fill="#000"/></svg>
<div class="a" style="left:524px;top:1270px;width:2314px;height:88px;background:#fafafa"></div>
<div class="a" style="left:524px;top:1358px;width:2314px;height:2px;background:#cecece"></div>
<svg style="left:537px;top:1306px" width="13" height="12" viewBox="0 0 13 12"><path d="M6.5 0 V12 M1 3 L12 9 M12 3 L1 9" stroke="#111" stroke-width="1.9"/></svg>
<svg style="left:757px;top:1301px" width="28" height="28" viewBox="0 0 28 28"><rect width="28" height="28" rx="4.5" fill="#4599ff"/><path d="M18.88 18.88 A6.9 6.9 0 1 1 19.2 9.47" fill="none" stroke="#fff" stroke-width="2.5"/><path d="M22.6 6.2 V12.1 H16.7 Z" fill="#fff"/></svg>
<div class="t cell" style="left:795px;top:1303px;letter-spacing:1.613px">/content-examples/form-elements/forms/thank-you</div>
<div class="t cell" style="left:1613px;top:1303px;letter-spacing:1.583px">/content-demo/form-elements/forms/thank-you<span style="color:#000"> (Statuscode: 307)</span></div>
<div class="a" style="left:2628px;top:1282px;width:176px;height:63px;background:#dedede;border:2px solid #c6c6c6;border-radius:4px"></div>
<div class="a" style="left:2686px;top:1283px;width:2px;height:61px;background:#c6c6c6"></div>
<div class="a" style="left:2744px;top:1283px;width:2px;height:61px;background:#c6c6c6"></div>
<svg style="left:2644px;top:1300px" width="29" height="29" viewBox="0 0 29 29"><path d="M19 2.4 L22.1 -0.4 L28.6 6 L25.6 9.4 Z" fill="#000"/><path d="M16.8 5.4 L23.4 12 L7 28.4 H0.4 V21.8 Z" fill="#000"/><path d="M6.6 19 L16.4 9.2" stroke="#dedede" stroke-width="1.2"/><path d="M2.4 23.4 L5.4 26.4 L3.6 27.6 L2.2 26.4 Z" fill="#dedede"/></svg>
<svg style="left:2700px;top:1305px" width="32" height="20" viewBox="0 0 32 20"><rect width="32" height="20" rx="10" fill="#000"/><circle cx="22.1" cy="10" r="6.2" fill="#dedede"/></svg>
<svg style="left:2762px;top:1301px" width="25" height="30" viewBox="0 0 25 30"><path d="M0 5 H24.2" stroke="#000" stroke-width="2.4"/><path d="M7.2 5 V2.8 Q7.2 1.1 9 1.1 H15.8 Q17.6 1.1 17.6 2.8 V5" fill="none" stroke="#000" stroke-width="2.2"/><path d="M3.2 6 V25.8 Q3.2 28.6 6 28.6 H18.4 Q21.2 28.6 21.2 25.8 V6" fill="none" stroke="#000" stroke-width="2.4"/><rect x="8" y="9" width="2.2" height="16" fill="#000"/><rect x="14" y="9" width="2.2" height="16" fill="#000"/></svg>
<div class="a" style="left:524px;top:1360px;width:2314px;height:88px;background:#f6f6f6"></div>
<div class="a" style="left:524px;top:1448px;width:2314px;height:2px;background:#cecece"></div>
<svg style="left:537px;top:1396px" width="13" height="12" viewBox="0 0 13 12"><path d="M6.5 0 V12 M1 3 L12 9 M12 3 L1 9" stroke="#111" stroke-width="1.9"/></svg>
<svg style="left:757px;top:1391px" width="28" height="28" viewBox="0 0 28 28"><rect width="28" height="28" rx="4.5" fill="#4599ff"/><path d="M18.88 18.88 A6.9 6.9 0 1 1 19.2 9.47" fill="none" stroke="#fff" stroke-width="2.5"/><path d="M22.6 6.2 V12.1 H16.7 Z" fill="#fff"/></svg>
<div class="t cell" style="left:795px;top:1393px;letter-spacing:1.503px">/content-examples/form-elements/login</div>
<div class="t cell" style="left:1613px;top:1393px;letter-spacing:1.518px">/content-demo/form-elements/login<span style="color:#000"> (Statuscode: 307)</span></div>
<div class="a" style="left:2628px;top:1372px;width:176px;height:63px;background:#dedede;border:2px solid #c6c6c6;border-radius:4px"></div>
<div class="a" style="left:2686px;top:1373px;width:2px;height:61px;background:#c6c6c6"></div>
<div class="a" style="left:2744px;top:1373px;width:2px;height:61px;background:#c6c6c6"></div>
<svg style="left:2644px;top:1390px" width="29" height="29" viewBox="0 0 29 29"><path d="M19 2.4 L22.1 -0.4 L28.6 6 L25.6 9.4 Z" fill="#000"/><path d="M16.8 5.4 L23.4 12 L7 28.4 H0.4 V21.8 Z" fill="#000"/><path d="M6.6 19 L16.4 9.2" stroke="#dedede" stroke-width="1.2"/><path d="M2.4 23.4 L5.4 26.4 L3.6 27.6 L2.2 26.4 Z" fill="#dedede"/></svg>
<svg style="left:2700px;top:1395px" width="32" height="20" viewBox="0 0 32 20"><rect width="32" height="20" rx="10" fill="#000"/><circle cx="22.1" cy="10" r="6.2" fill="#dedede"/></svg>
<svg style="left:2762px;top:1391px" width="25" height="30" viewBox="0 0 25 30"><path d="M0 5 H24.2" stroke="#000" stroke-width="2.4"/><path d="M7.2 5 V2.8 Q7.2 1.1 9 1.1 H15.8 Q17.6 1.1 17.6 2.8 V5" fill="none" stroke="#000" stroke-width="2.2"/><path d="M3.2 6 V25.8 Q3.2 28.6 6 28.6 H18.4 Q21.2 28.6 21.2 25.8 V6" fill="none" stroke="#000" stroke-width="2.4"/><rect x="8" y="9" width="2.2" height="16" fill="#000"/><rect x="14" y="9" width="2.2" height="16" fill="#000"/></svg>
<div class="a" style="left:524px;top:1450px;width:2314px;height:88px;background:#fafafa"></div>
<div class="a" style="left:524px;top:1538px;width:2314px;height:2px;background:#cecece"></div>
<svg style="left:537px;top:1486px" width="13" height="12" viewBox="0 0 13 12"><path d="M6.5 0 V12 M1 3 L12 9 M12 3 L1 9" stroke="#111" stroke-width="1.9"/></svg>
<svg style="left:757px;top:1481px" width="28" height="28" viewBox="0 0 28 28"><rect width="28" height="28" rx="4.5" fill="#4599ff"/><path d="M18.88 18.88 A6.9 6.9 0 1 1 19.2 9.47" fill="none" stroke="#fff" stroke-width="2.5"/><path d="M22.6 6.2 V12.1 H16.7 Z" fill="#fff"/></svg>
<div class="t cell" style="left:795px;top:1483px;letter-spacing:1.461px">/content-examples/form-elements/search</div>
<div class="t cell" style="left:1613px;top:1483px;letter-spacing:1.489px">/content-demo/form-elements/search<span style="color:#000"> (Statuscode: 307)</span></div>
<div class="a" style="left:2628px;top:1462px;width:176px;height:63px;background:#dedede;border:2px solid #c6c6c6;border-radius:4px"></div>
<div class="a" style="left:2686px;top:1463px;width:2px;height:61px;background:#c6c6c6"></div>
<div class="a" style="left:2744px;top:1463px;width:2px;height:61px;background:#c6c6c6"></div>
<svg style="left:2644px;top:1480px" width="29" height="29" viewBox="0 0 29 29"><path d="M19 2.4 L22.1 -0.4 L28.6 6 L25.6 9.4 Z" fill="#000"/><path d="M16.8 5.4 L23.4 12 L7 28.4 H0.4 V21.8 Z" fill="#000"/><path d="M6.6 19 L16.4 9.2" stroke="#dedede" stroke-width="1.2"/><path d="M2.4 23.4 L5.4 26.4 L3.6 27.6 L2.2 26.4 Z" fill="#dedede"/></svg>
<svg style="left:2700px;top:1485px" width="32" height="20" viewBox="0 0 32 20"><rect width="32" height="20" rx="10" fill="#000"/><circle cx="22.1" cy="10" r="6.2" fill="#dedede"/></svg>
<svg style="left:2762px;top:1481px" width="25" height="30" viewBox="0 0 25 30"><path d="M0 5 H24.2" stroke="#000" stroke-width="2.4"/><path d="M7.2 5 V2.8 Q7.2 1.1 9 1.1 H15.8 Q17.6 1.1 17.6 2.8 V5" fill="none" stroke="#000" stroke-width="2.2"/><path d="M3.2 6 V25.8 Q3.2 28.6 6 28.6 H18.4 Q21.2 28.6 21.2 25.8 V6" fill="none" stroke="#000" stroke-width="2.4"/><rect x="8" y="9" width="2.2" height="16" fill="#000"/><rect x="14" y="9" width="2.2" height="16" fill="#000"/></svg>
<div class="a" style="left:524px;top:1540px;width:2314px;height:88px;background:#f6f6f6"></div>
<div class="a" style="left:524px;top:1628px;width:2314px;height:2px;background:#cecece"></div>
<svg style="left:537px;top:1576px" width="13" height="12" viewBox="0 0 13 12"><path d="M6.5 0 V12 M1 3 L12 9 M12 3 L1 9" stroke="#111" stroke-width="1.9"/></svg>
<svg style="left:757px;top:1571px" width="28" height="28" viewBox="0 0 28 28"><rect width="28" height="28" rx="4.5" fill="#4599ff"/><path d="M18.88 18.88 A6.9 6.9 0 1 1 19.2 9.47" fill="none" stroke="#fff" stroke-width="2.5"/><path d="M22.6 6.2 V12.1 H16.7 Z" fill="#fff"/></svg>
<div class="t cell" style="left:795px;top:1573px;letter-spacing:1.479px">/content-examples/interactive</div>
<div class="t cell" style="left:1613px;top:1573px;letter-spacing:1.514px">/content-demo/interactive<span style="color:#000"> (Statuscode: 307)</span></div>
<div class="a" style="left:2628px;top:1552px;width:176px;height:63px;background:#dedede;border:2px solid #c6c6c6;border-radius:4px"></div>
<div class="a" style="left:2686px;top:1553px;width:2px;height:61px;background:#c6c6c6"></div>
<div class="a" style="left:2744px;top:1553px;width:2px;height:61px;background:#c6c6c6"></div>
<svg style="left:2644px;top:1570px" width="29" height="29" viewBox="0 0 29 29"><path d="M19 2.4 L22.1 -0.4 L28.6 6 L25.6 9.4 Z" fill="#000"/><path d="M16.8 5.4 L23.4 12 L7 28.4 H0.4 V21.8 Z" fill="#000"/><path d="M6.6 19 L16.4 9.2" stroke="#dedede" stroke-width="1.2"/><path d="M2.4 23.4 L5.4 26.4 L3.6 27.6 L2.2 26.4 Z" fill="#dedede"/></svg>
<svg style="left:2700px;top:1575px" width="32" height="20" viewBox="0 0 32 20"><rect width="32" height="20" rx="10" fill="#000"/><circle cx="22.1" cy="10" r="6.2" fill="#dedede"/></svg>
<svg style="left:2762px;top:1571px" width="25" height="30" viewBox="0 0 25 30"><path d="M0 5 H24.2" stroke="#000" stroke-width="2.4"/><path d="M7.2 5 V2.8 Q7.2 1.1 9 1.1 H15.8 Q17.6 1.1 17.6 2.8 V5" fill="none" stroke="#000" stroke-width="2.2"/><path d="M3.2 6 V25.8 Q3.2 28.6 6 28.6 H18.4 Q21.2 28.6 21.2 25.8 V6" fill="none" stroke="#000" stroke-width="2.4"/><rect x="8" y="9" width="2.2" height="16" fill="#000"/><rect x="14" y="9" width="2.2" height="16" fill="#000"/></svg>
</body></html>
